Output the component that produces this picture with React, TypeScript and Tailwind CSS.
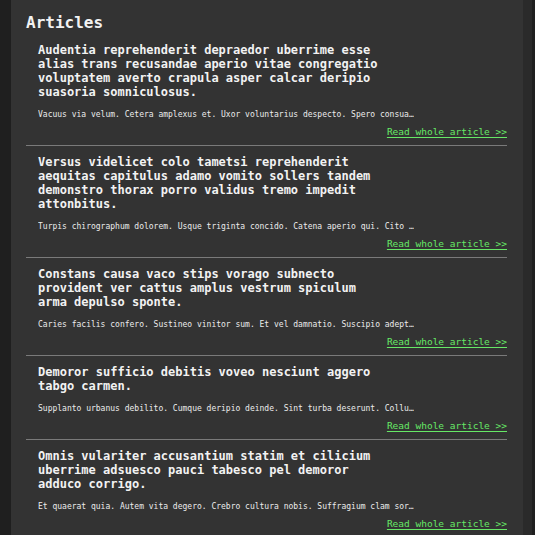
import React from 'react';

type Article = {
  title: string;
  summary: string;
};

const articles: Article[] = [
  {
    title:
      'Audentia reprehenderit depraedor uberrime esse alias trans recusandae aperio vitae congregatio voluptatem averto crapula asper calcar deripio suasoria somniculosus.',
    summary:
      'Vacuus via velum. Cetera amplexus et. Uxor voluntarius despecto. Spero consuasor tenax velut.',
  },
  {
    title:
      'Versus videlicet colo tametsi reprehenderit aequitas capitulus adamo vomito sollers tandem demonstro thorax porro validus tremo impedit attonbitus.',
    summary:
      'Turpis chirographum dolorem. Usque triginta concido. Catena aperio qui. Cito vesica ars.',
  },
  {
    title:
      'Constans causa vaco stips vorago subnecto provident ver cattus amplus vestrum spiculum arma depulso sponte.',
    summary:
      'Caries facilis confero. Sustineo vinitor sum. Et vel damnatio. Suscipio adeptio cohaero.',
  },
  {
    title: 'Demoror sufficio debitis voveo nesciunt aggero tabgo carmen.',
    summary:
      'Supplanto urbanus debilito. Cumque deripio deinde. Sint turba deserunt. Collum nihil.',
  },
  {
    title:
      'Omnis vulariter accusantium statim et cilicium uberrime adsuesco pauci tabesco pel demoror adduco corrigo.',
    summary:
      'Et quaerat quia. Autem vita degero. Crebro cultura nobis. Suffragium clam sor…',
  },
];

const ArticleItem: React.FC<{ article: Article; first: boolean }> = ({ article, first }) => (
  <div className={first ? 'pb-[7px]' : 'border-t border-[#7a7a7a] pt-[9px] pb-[7px]'}>
    <div className="pl-3">
      <h2 className="max-w-[346px] text-[12px] leading-[14px] font-bold text-[#f2f2f2]">
        {article.title}
      </h2>
      <p className="mt-[11px] w-[376px] truncate text-[8px] leading-[10px] text-[#ececec]">
        {article.summary}
      </p>
    </div>
    <div className="mt-[6px] flex justify-end">
      <a href="#" className="text-[9.5px] leading-[12px] text-[#66e866] underline underline-offset-2">
        Read whole article &gt;&gt;
      </a>
    </div>
  </div>
);

export default function App() {
  return (
    <div
      className="flex h-[535px] w-[535px] overflow-hidden bg-[#1f1f1f]"
      style={{ fontFamily: '"DejaVu Sans Mono", "Liberation Mono", monospace' }}
    >
      <div className="w-[11px] shrink-0" />
      <main className="w-[512px] shrink-0 bg-[#333333] pl-[15px] pr-4 pt-[13px]">
        <h1 className="text-[16px] leading-[20px] font-bold text-[#f2f2f2]">Articles</h1>
        <div className="mt-[10px] flex flex-col">
          {articles.map((a, i) => (
            <ArticleItem key={i} article={a} first={i === 0} />
          ))}
        </div>
      </main>
      <div className="w-[9px] shrink-0 bg-[#2a2a2a]" />
    </div>
  );
}
